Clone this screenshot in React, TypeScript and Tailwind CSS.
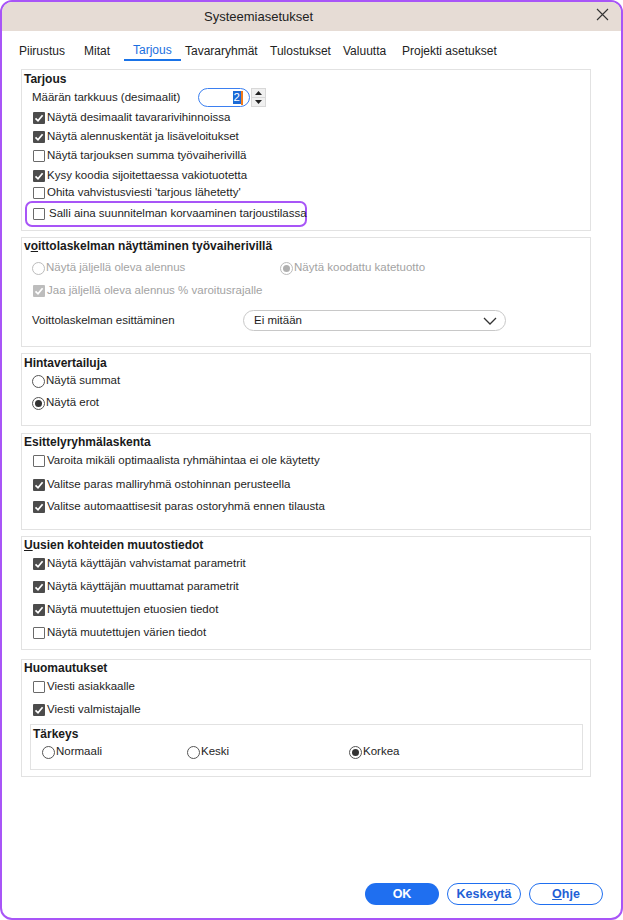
import React from "react";

const font = { fontFamily: '"Liberation Sans", Arial, sans-serif' };

function CheckBox({ checked = false, disabled = false, label, gap = "ml-[2px]" }: { checked?: boolean; disabled?: boolean; label: string; gap?: string }) {
  return (
    <div className="flex items-center whitespace-nowrap">
      {checked ? (
        <span className={`w-[12px] h-[12px] shrink-0 flex items-center justify-center rounded-[1px] ${disabled ? "bg-[#bdbdbd]" : "bg-[#4c4c4c]"}`}>
          <svg width="10" height="10" viewBox="0 0 10 10">
            <path d="M1.5 5.3 L4 7.8 L8.6 2.2" fill="none" stroke="#fff" strokeWidth="1.7" />
          </svg>
        </span>
      ) : (
        <span className="w-[12px] h-[12px] shrink-0 border border-[#6a6a6a] bg-white rounded-[1px]" />
      )}
      <span className={`${gap} ${disabled ? "text-[#a3a3a3]" : "text-[#1e1e1e]"}`}>{label}</span>
    </div>
  );
}

function Radio({ checked = false, disabled = false, label }: { checked?: boolean; disabled?: boolean; label: string }) {
  return (
    <div className="flex items-center whitespace-nowrap">
      <span
        className={`w-[13px] h-[13px] shrink-0 rounded-full border flex items-center justify-center bg-white ${
          disabled ? "border-[#bcbcbc]" : "border-[#555]"
        }`}
      >
        {checked && <span className={`w-[7px] h-[7px] rounded-full ${disabled ? "bg-[#b0b0b0]" : "bg-[#333]"}`} />}
      </span>
      <span className={`ml-[1px] ${disabled ? "text-[#a3a3a3]" : "text-[#1e1e1e]"}`}>{label}</span>
    </div>
  );
}

function Group({ className, children }: { className: string; children: React.ReactNode }) {
  return <div className={`ml-[19px] w-[570px] border border-[#e2e2e2] flex flex-col shrink-0 ${className}`}>{children}</div>;
}

function Title({ children, className = "" }: { children: React.ReactNode; className?: string }) {
  return <div className={`pl-[2px] font-bold text-[12px] text-[#1a1a1a] flex items-center whitespace-nowrap ${className}`}>{children}</div>;
}

export default function App() {
  const tabs = [
    { label: "Piirustus", w: "w-[65px]" },
    { label: "Mitat", w: "w-[49px]" },
    { label: "Tarjous", w: "w-[52px]", active: true },
    { label: "Tavararyhmät", w: "w-[85px]" },
    { label: "Tulostukset", w: "w-[73px]" },
    { label: "Valuutta", w: "w-[59px]" },
    { label: "Projekti asetukset", w: "" },
  ];

  return (
    <div style={font} className="w-[623px] h-[920px] bg-white text-[11.5px] text-[#1e1e1e]">
      <div className="w-[623px] h-[920px] border-2 border-[#a855f7] rounded-[12px] overflow-hidden flex flex-col">
        {/* Title bar */}
        <div className="h-[29px] bg-[#e6dcd5] flex items-center relative shrink-0">
          <span className="pl-[202px] text-[13px] text-[#222]">Systeemiasetukset</span>
          <svg className="absolute right-[12px] top-[6px]" width="13" height="13" viewBox="0 0 13 13">
            <path d="M1 1 L12 12 M12 1 L1 12" stroke="#333" strokeWidth="1.1" />
          </svg>
        </div>

        {/* Tabs */}
        <div className="h-[30px] flex items-end pl-[17px] shrink-0 text-[12px] text-[#222]">
          {tabs.map((t) => (
            <div key={t.label} className={`${t.w} shrink-0 h-[30px] flex items-end`}>
              {t.active ? (
                <span className="-ml-[9px] px-[9px] h-[23px] flex items-center border-b-2 border-[#1a73e8] text-[#1a6fe0] pt-[2px]">
                  {t.label}
                </span>
              ) : (
                <span className="h-[24px] flex items-center pt-[3px]">{t.label}</span>
              )}
            </div>
          ))}
        </div>

        <div className="h-[8px] shrink-0" />

        {/* Tarjous */}
        <Group className="h-[162px]">
          <Title className="h-[17px]">Tarjous</Title>
          <div className="h-[21px] flex items-center pl-[10px] whitespace-nowrap">
            <span className="w-[166px]">Määrän tarkkuus (desimaalit)</span>
            <div className="w-[52px] h-[19px] rounded-full border border-[#3b7ff0] flex items-center justify-end pr-[6px]">
              <span className="bg-[#1b6ad6] text-white px-[1px] leading-[13px]">2</span>
              <span className="w-[2px] h-[14px] bg-[#f07a1a]" />
            </div>
            <div className="ml-[1px] w-[15px] h-[19px] flex flex-col bg-[#f0f0f0] border border-[#d8d8d8]">
              <div className="flex-1 flex items-center justify-center border-b border-[#d8d8d8]">
                <svg width="7" height="4" viewBox="0 0 7 4"><path d="M0 4 L3.5 0 L7 4Z" fill="#222" /></svg>
              </div>
              <div className="flex-1 flex items-center justify-center">
                <svg width="7" height="4" viewBox="0 0 7 4"><path d="M0 0 L3.5 4 L7 0Z" fill="#222" /></svg>
              </div>
            </div>
          </div>
          <div className="h-[19px] flex items-center pl-[11px]"><CheckBox checked label="Näytä desimaalit tavararivihinnoissa" /></div>
          <div className="h-[19px] flex items-center pl-[11px]"><CheckBox checked label="Näytä alennuskentät ja lisäveloitukset" /></div>
          <div className="h-[20px] flex items-center pl-[11px]"><CheckBox label="Näytä tarjouksen summa työvaiherivillä" /></div>
          <div className="h-[19px] flex items-center pl-[11px]"><CheckBox checked label="Kysy koodia sijoitettaessa vakiotuotetta" /></div>
          <div className="h-[16px] flex items-center pl-[11px]"><CheckBox label="Ohita vahvistusviesti 'tarjous lähetetty'" /></div>
          <div className="ml-[3px] w-[282px] h-[26px] border-2 border-[#a855f7] rounded-[7px] flex items-center pl-[6px]">
            <CheckBox label="Salli aina suunnitelman korvaaminen tarjoustilassa" gap="ml-[4px]" />
          </div>
        </Group>

        <div className="h-[6px] shrink-0" />

        {/* voittolaskelma */}
        <Group className="h-[110px]">
          <Title className="h-[15px]">
            <span>
              v<span className="underline">o</span>ittolaskelman näyttäminen työvaiherivillä
            </span>
          </Title>
          <div className="h-[18px] mt-[6px] flex items-center pl-[10px]">
            <div className="w-[248px]"><Radio disabled label="Näytä jäljellä oleva alennus" /></div>
            <Radio disabled checked label="Näytä koodattu katetuotto" />
          </div>
          <div className="h-[18px] mt-[5px] flex items-center pl-[11px]"><CheckBox disabled checked label="Jaa jäljellä oleva alennus % varoitusrajalle" /></div>
          <div className="h-[21px] mt-[10px] flex items-center pl-[10px] whitespace-nowrap">
            <span className="w-[211px]">Voittolaskelman esittäminen</span>
            <div className="w-[263px] h-[21px] rounded-full border border-[#c8c8c8] flex items-center justify-between pl-[10px] pr-[8px]">
              <span>Ei mitään</span>
              <svg width="14" height="8" viewBox="0 0 14 8"><path d="M1 1 L7 7 L13 1" fill="none" stroke="#333" strokeWidth="1.3" /></svg>
            </div>
          </div>
        </Group>

        <div className="h-[6px] shrink-0" />

        {/* Hintavertailuja */}
        <Group className="h-[73px]">
          <Title className="h-[17px]">Hintavertailuja</Title>
          <div className="h-[18px] mt-[1px] flex items-center pl-[10px]"><Radio label="Näytä summat" /></div>
          <div className="h-[18px] mt-[4px] flex items-center pl-[10px]"><Radio checked label="Näytä erot" /></div>
        </Group>

        <div className="h-[7px] shrink-0" />

        {/* Esittelyryhmälaskenta */}
        <Group className="h-[97px]">
          <Title className="h-[15px]">Esittelyryhmälaskenta</Title>
          <div className="h-[18px] mt-[3px] flex items-center pl-[11px]"><CheckBox label="Varoita mikäli optimaalista ryhmähintaa ei ole käytetty" /></div>
          <div className="h-[18px] mt-[6px] flex items-center pl-[11px]"><CheckBox checked label="Valitse paras malliryhmä ostohinnan perusteella" /></div>
          <div className="h-[18px] mt-[4px] flex items-center pl-[11px]"><CheckBox checked label="Valitse automaattisesit paras ostoryhmä ennen tilausta" /></div>
        </Group>

        <div className="h-[6px] shrink-0" />

        {/* Uusien kohteiden muutostiedot */}
        <Group className="h-[114px]">
          <Title className="h-[15px]">
            <span>
              <span className="underline">U</span>usien kohteiden muutostiedot
            </span>
          </Title>
          <div className="h-[18px] mt-[3px] flex items-center pl-[11px]"><CheckBox checked label="Näytä käyttäjän vahvistamat parametrit" /></div>
          <div className="h-[18px] mt-[5px] flex items-center pl-[11px]"><CheckBox checked label="Näytä käyttäjän muuttamat parametrit" /></div>
          <div className="h-[18px] mt-[5px] flex items-center pl-[11px]"><CheckBox checked label="Näytä muutettujen etuosien tiedot" /></div>
          <div className="h-[18px] mt-[5px] flex items-center pl-[11px]"><CheckBox label="Näytä muutettujen värien tiedot" /></div>
        </Group>

        <div className="h-[9px] shrink-0" />

        {/* Huomautukset */}
        <Group className="h-[118px]">
          <Title className="h-[15px]">Huomautukset</Title>
          <div className="h-[18px] mt-[3px] flex items-center pl-[11px]"><CheckBox label="Viesti asiakkaalle" /></div>
          <div className="h-[18px] mt-[5px] flex items-center pl-[11px]"><CheckBox checked label="Viesti valmistajalle" /></div>
          <div className="mt-[5px] ml-[8px] w-[553px] h-[46px] border border-[#e2e2e2] flex flex-col">
            <Title className="h-[16px] pt-[1px]">Tärkeys</Title>
            <div className="h-[18px] mt-[2px] flex items-center pl-[11px]">
              <div className="w-[145px]"><Radio label="Normaali" /></div>
              <div className="w-[162px]"><Radio label="Keski" /></div>
              <Radio checked label="Korkea" />
            </div>
          </div>
        </Group>

        {/* Buttons */}
        <div className="mt-auto mb-[13px] flex justify-end gap-[8px] pr-[18px] text-[12.5px] font-bold">
          <button className="w-[74px] h-[22px] rounded-full bg-[#1f6ff0] text-white">OK</button>
          <button className="w-[74px] h-[22px] rounded-full border border-[#1f6ff0] text-[#1f5fd6] bg-white">Keskeytä</button>
          <button className="w-[74px] h-[22px] rounded-full border border-[#1f6ff0] text-[#1f5fd6] bg-white">
            <span className="underline">O</span>hje
          </button>
        </div>
      </div>
    </div>
  );
}
